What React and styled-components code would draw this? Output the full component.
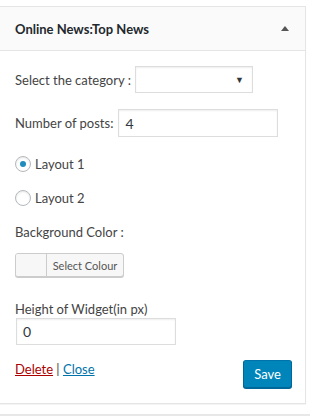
import styled, { createGlobalStyle } from "styled-components";

const Global = createGlobalStyle`
  body {
    margin: 0;
    background: #fff;
    font-family: "Lato", "Liberation Sans", sans-serif;
    font-size: 13px;
    color: #444;
  }
`;

const Page = styled.div`
  padding-top: 6px;
  width: 310px;
  height: 416px;
  overflow: hidden;
`;

const Panel = styled.div`
  width: 305px;
  margin-left: -1px;
  border: 1px solid #e5e5e5;
  box-shadow: 0 1px 1px rgba(0, 0, 0, 0.04);
  background: #fff;
`;

const Header = styled.div`
  height: 43px;
  display: flex;
  align-items: center;
  justify-content: space-between;
  padding: 0 16px 0 15px;
  background: #fafafa;
  border-bottom: 1px solid #e5e5e5;
`;

const Title = styled.h3`
  margin: 0;
  font-size: 13px;
  font-weight: 700;
  color: #23282d;
`;

const Caret = styled.span`
  width: 0;
  height: 0;
  border-left: 4px solid transparent;
  border-right: 4px solid transparent;
  border-bottom: 5px solid #555;
`;

const Body = styled.div`
  padding: 0 13px 15px 15px;
`;

const Row = styled.div`
  display: flex;
  align-items: center;
  gap: ${(p) => p.$gap || 4}px;
  margin-top: ${(p) => p.$top}px;
  height: ${(p) => p.$h}px;
`;

const Label = styled.span`
  color: #444;
  line-height: 18px;
`;

const SelectBox = styled.div`
  width: 118px;
  height: 27px;
  box-sizing: border-box;
  border: 1px solid #ddd;
  box-shadow: inset 0 1px 2px rgba(0, 0, 0, 0.07);
  display: flex;
  align-items: center;
  justify-content: flex-end;
  padding-right: 8px;
  font-size: 9px;
  color: #32373c;
`;

const TextInput = styled.div`
  width: ${(p) => p.$w}px;
  height: ${(p) => p.$h}px;
  margin-left: ${(p) => p.$ml || 0}px;
  box-sizing: border-box;
  border: 1px solid #ddd;
  box-shadow: inset 0 1px 2px rgba(0, 0, 0, 0.07);
  display: flex;
  align-items: center;
  padding-left: 6px;
  color: #32373c;
  font-size: 14px;
`;

const Radio = styled.span`
  width: 16px;
  height: 16px;
  box-sizing: border-box;
  border-radius: 50%;
  border: 1px solid #b4b9be;
  box-shadow: inset 0 1px 2px rgba(0, 0, 0, 0.1);
  display: flex;
  align-items: center;
  justify-content: center;
  &::after {
    content: "";
    display: ${(p) => (p.$checked ? "block" : "none")};
    width: 6px;
    height: 6px;
    border-radius: 50%;
    background: #1e8cbe;
  }
`;

const ColourButton = styled.div`
  width: 109px;
  height: 24px;
  box-sizing: border-box;
  display: flex;
  border: 1px solid #ccc;
  border-radius: 3px;
  background: #f7f7f7;
  box-shadow: 0 1px 0 #ccc;
  overflow: hidden;
`;

const Swatch = styled.span`
  width: 30px;
  border-right: 1px solid #ccc;
  background: #f7f7f7;
`;

const SwatchText = styled.span`
  flex: 1;
  display: flex;
  align-items: center;
  justify-content: center;
  font-size: 11px;
  color: #555;
`;

const Actions = styled.div`
  display: flex;
  align-items: flex-start;
  justify-content: space-between;
  margin-top: 15px;
  height: 28px;
`;

const Links = styled.span`
  color: #444;
  line-height: 18px;
`;

const Link = styled.a`
  color: ${(p) => (p.$danger ? "#a00" : "#0073aa")};
  text-decoration: underline;
`;

const SaveButton = styled.button`
  height: 28px;
  padding: 0 10px;
  font-family: inherit;
  font-size: 13px;
  color: #fff;
  background: #0085ba;
  border: 1px solid #0073aa;
  border-color: #0073aa #006799 #006799;
  border-radius: 3px;
  box-shadow: 0 1px 0 #006799;
`;

const NextWidget = styled.div`
  margin-top: 10px;
  height: 3px;
  background: #e8e8e8;
`;

export default function App() {
  return (
    <>
      <Global />
      <Page>
        <Panel>
          <Header>
            <Title>Online News:Top News</Title>
            <Caret />
          </Header>
          <Body>
            <Row $top={15} $h={27}>
              <Label>Select the category :</Label>
              <SelectBox>▼</SelectBox>
            </Row>
            <Row $top={16} $h={28}>
              <Label>Number of posts:</Label>
              <TextInput $w={160} $h={28} $ml={1}>4</TextInput>
            </Row>
            <Row $top={17} $h={20}>
              <Radio $checked />
              <Label>Layout 1</Label>
            </Row>
            <Row $top={14} $h={20}>
              <Radio />
              <Label>Layout 2</Label>
            </Row>
            <Row $top={14} $h={20}>
              <Label>Background Color :</Label>
            </Row>
            <Row $top={11} $h={24}>
              <ColourButton>
                <Swatch />
                <SwatchText>Select Colour</SwatchText>
              </ColourButton>
            </Row>
            <Row $top={23} $h={18}>
              <Label>Height of Widget(in px)</Label>
            </Row>
            <Row $top={0} $h={27}>
              <TextInput $w={160} $h={27} $ml={1}>0</TextInput>
            </Row>
            <Actions>
              <Links>
                <Link $danger href="#">Delete</Link> | <Link href="#">Close</Link>
              </Links>
              <SaveButton>Save</SaveButton>
            </Actions>
          </Body>
        </Panel>
        <NextWidget />
      </Page>
    </>
  );
}
